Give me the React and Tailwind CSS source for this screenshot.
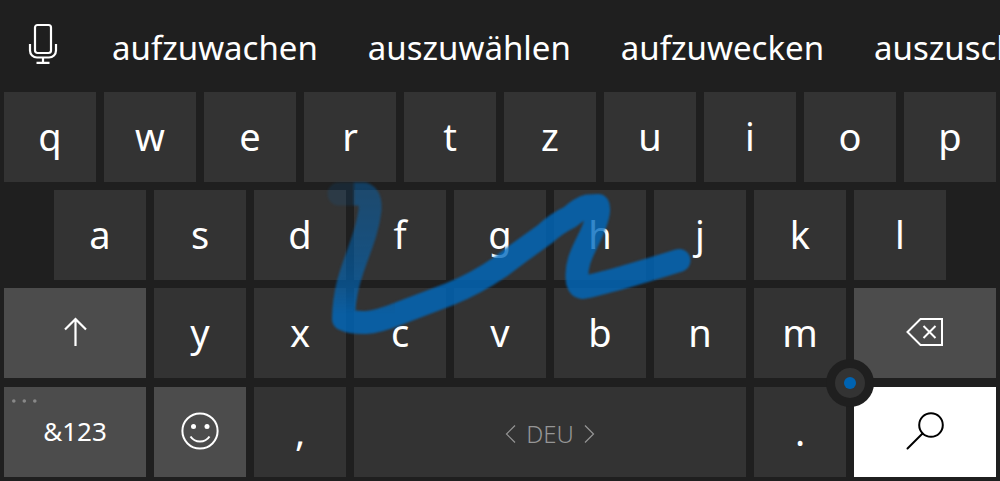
import clsx from 'clsx'

const suggestions = ['aufzuwachen', 'auszuwählen', 'aufzuwecken', 'auszuschlafen']
const topRow = ['q', 'w', 'e', 'r', 't', 'z', 'u', 'i', 'o', 'p']
const homeRow = ['a', 's', 'd', 'f', 'g', 'h', 'j', 'k', 'l']
const lowRow = ['y', 'x', 'c', 'v', 'b', 'n', 'm']

function LetterKey({ label, className }) {
    return (
        <button type="button" className={clsx('col-span-2 h-[90px] bg-[#333333] pb-0.5 text-[38px] leading-none text-white', className)}>
            {label}
        </button>
    )
}

function IconKey({ label, className, children }) {
    return (
        <button type="button" aria-label={label} className={clsx('flex h-[90px] items-center justify-center pb-0.5', className)}>
            {children}
        </button>
    )
}

function MicIcon() {
    return (
        <svg width="30" height="42" viewBox="0 0 30 42" fill="none" stroke="white" strokeWidth="2.2">
            <rect x="7" y="2" width="16" height="28" rx="2.5" />
            <path d="M2 21v6.500a7 7 0 0 0 7 7h12a7 7 0 0 0 7-7V21M15 34.500v5M8.500 39.900h13" />
        </svg>
    )
}

function ShiftIcon() {
    return (
        <svg width="24" height="30" viewBox="0 0 24 30" fill="none" stroke="white" strokeWidth="2.2">
            <path d="M12.500 29V2M2 12.500 12.500 2 23 12.500" />
        </svg>
    )
}

function BackspaceIcon() {
    return (
        <svg width="38" height="28" viewBox="0 0 38 28" fill="none" stroke="white" strokeWidth="2">
            <path d="M1.500 14 14.500 1H36v26H14.500zM17.500 8l12 12M29.500 8l-12 12" />
        </svg>
    )
}

function SmileyIcon() {
    return (
        <svg width="38" height="38" viewBox="0 0 38 38" fill="none" stroke="white" strokeWidth="2">
            <circle cx="19" cy="19" r="17.600" />
            <circle cx="12.500" cy="14.500" r="2.500" fill="white" stroke="none" />
            <circle cx="26" cy="14.500" r="2.500" fill="white" stroke="none" />
            <path d="M9.500 24.500c4.500 6.700 14.500 6.700 19 0" />
        </svg>
    )
}

function SearchIcon() {
    return (
        <svg width="38" height="38" viewBox="0 0 38 38" fill="none" stroke="black" strokeWidth="2">
            <circle cx="25" cy="13" r="11.800" />
            <path d="M16.500 21.500 1.500 36.500" strokeLinecap="round" />
        </svg>
    )
}

// finger trail of the swiped word, oldest part fades out
function SwipeTrail() {
    return (
        <svg aria-hidden="true" className="pointer-events-none absolute inset-0 h-full w-full" viewBox="0 0 1000 389" preserveAspectRatio="none">
            <defs>
                <linearGradient id="fade" gradientUnits="userSpaceOnUse" x1="0" y1="95" x2="0" y2="222">
                    <stop offset="0" stopColor="#868686" />
                    <stop offset="0.500" stopColor="#acacac" />
                    <stop offset="0.800" stopColor="#cccccc" />
                    <stop offset="1" stopColor="#ffffff" />
                </linearGradient>
                <linearGradient id="tip">
                    <stop offset="0.900" stopColor="#2c2c2c" />
                    <stop offset="1" stopColor="#2c2c2c" stopOpacity="0" />
                </linearGradient>
                <mask id="trail" maskUnits="userSpaceOnUse" x="0" y="0" width="1000" height="389">
                    <rect width="1000" height="389" fill="white" />
                    <rect x="315" y="80" width="80" height="142" fill="url(#fade)" />
                    <rect x="315" y="80" width="41" height="37" fill="url(#tip)" />
                </mask>
                <filter id="soft">
                    <feGaussianBlur stdDeviation="1.200" />
                </filter>
            </defs>
            <g mask="url(#trail)">
                <path
                    d="M339 102L364 102Q371 105 370 118C366 155 344 180 343.500 227Q352 231 366 230.500C378 230 390 225 400 221L450 202Q475 192 500 175L520 160L545 142Q557 131 570 125Q580 116 588 114L598 113.500Q601 118 594 135C588 152 574 168 577.500 190Q579 195 582 195.500Q600 193 679 168.500"
                    fill="none"
                    stroke="#0069be"
                    strokeOpacity="0.800"
                    strokeWidth="23"
                    strokeLinecap="round"
                    strokeLinejoin="round"
                    filter="url(#soft)"
                />
            </g>
        </svg>
    )
}

export default function App() {
    return (
        <main className="min-h-screen overflow-hidden bg-[#1f1f1f] font-['Noto_Sans','Open_Sans',sans-serif] text-white">
            <div className="flex h-[92px] items-center overflow-hidden pl-7">
                <button type="button" aria-label="Spracheingabe" className="shrink-0 pb-1">
                    <MicIcon />
                </button>
                <div className="ml-[54px] flex gap-[50px] whitespace-nowrap pt-0.5 text-[33px] leading-none">
                    {suggestions.map((word) => (
                        <button type="button" key={word}>{word}</button>
                    ))}
                </div>
            </div>

            <div className="relative flex flex-col gap-[9px] px-1 pb-1">
                <div className="grid grid-cols-20 gap-2">
                    {topRow.map((k) => <LetterKey key={k} label={k} />)}
                    {homeRow.map((k) => <LetterKey key={k} label={k} className={k === 'a' && 'col-start-2'} />)}
                    <IconKey label="Umschalt" className="col-span-3 col-start-1 bg-[#4c4c4c]">
                        <ShiftIcon />
                    </IconKey>
                    {lowRow.map((k) => <LetterKey key={k} label={k} />)}
                    <IconKey label="Rücktaste" className="col-span-3 bg-[#4c4c4c]">
                        <BackspaceIcon />
                    </IconKey>
                </div>

                <div className="grid grid-cols-20 gap-2">
                    <button type="button" className="relative col-span-3 h-[90px] bg-[#4c4c4c] pb-0.5 text-[26px] leading-none">
                        <svg width="28" height="4" viewBox="0 0 28 4" fill="#888888" className="absolute top-3 left-2">
                            <circle cx="1.800" cy="2" r="1.800" />
                            <circle cx="12.300" cy="2" r="1.800" />
                            <circle cx="22.800" cy="2" r="1.800" />
                        </svg>
                        &amp;123
                    </button>
                    <IconKey label="Emoji" className="col-span-2 bg-[#4c4c4c]">
                        <SmileyIcon />
                    </IconKey>
                    <LetterKey label="," />
                    <button type="button" className="col-span-8 flex h-[90px] items-center justify-center gap-2.5 bg-[#333333] pt-1 text-2xl font-light text-[#969696]">
                        <svg width="11" height="18" viewBox="0 0 11 18" fill="none" stroke="currentColor" strokeWidth="1.200">
                            <path d="M10 .500 1.500 9 10 17.500" />
                        </svg>
                        DEU
                        <svg width="11" height="18" viewBox="0 0 11 18" fill="none" stroke="currentColor" strokeWidth="1.200">
                            <path d="M1 .500 9.500 9 1 17.500" />
                        </svg>
                    </button>
                    <LetterKey label="." />
                    <IconKey label="Suchen" className="col-span-3 bg-white">
                        <SearchIcon />
                    </IconKey>
                </div>

                <SwipeTrail />

                {/* cursor nub, sits where the last four keys meet */}
                <button type="button" aria-label="Cursor" className="absolute right-[126px] bottom-[74px] flex size-12 items-center justify-center rounded-full bg-[#1f1f1f]">
                    <span className="flex size-[30px] items-center justify-center rounded-full bg-[#333333]">
                        <span className="size-3 rounded-full bg-[#0063b1]" />
                    </span>
                </button>
            </div>
        </main>
    )
}
